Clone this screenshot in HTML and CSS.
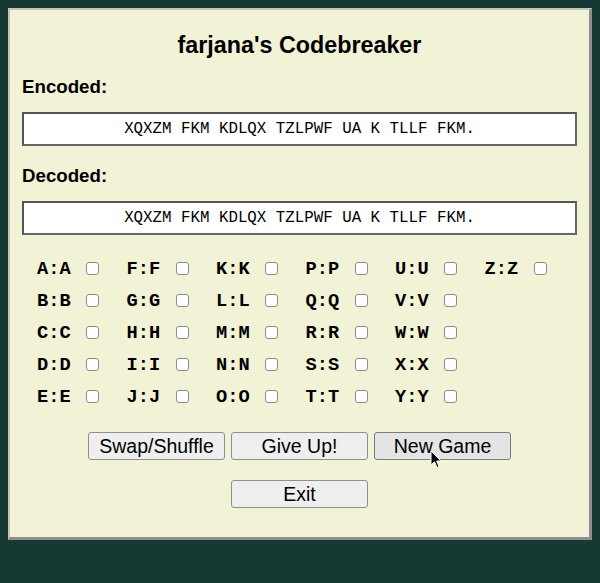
FILE: index.html
```html
<!DOCTYPE html>
<html>
<head>
<meta charset="utf-8">
<link rel="stylesheet" href="styles.css">
</head>
<body>
<div class="panel">
  <h1 class="title">farjana's Codebreaker</h1>
  <div class="label">Encoded:</div>
  <div class="box">XQXZM FKM KDLQX TZLPWF UA K TLLF FKM.</div>
  <div class="label label-dec">Decoded:</div>
  <div class="box">XQXZM FKM KDLQX TZLPWF UA K TLLF FKM.</div>
  <div class="grid">
    <div class="cell"><span class="pair">A:A</span><span class="check"></span></div>
    <div class="cell"><span class="pair">B:B</span><span class="check"></span></div>
    <div class="cell"><span class="pair">C:C</span><span class="check"></span></div>
    <div class="cell"><span class="pair">D:D</span><span class="check"></span></div>
    <div class="cell"><span class="pair">E:E</span><span class="check"></span></div>
    <div class="cell"><span class="pair">F:F</span><span class="check"></span></div>
    <div class="cell"><span class="pair">G:G</span><span class="check"></span></div>
    <div class="cell"><span class="pair">H:H</span><span class="check"></span></div>
    <div class="cell"><span class="pair">I:I</span><span class="check"></span></div>
    <div class="cell"><span class="pair">J:J</span><span class="check"></span></div>
    <div class="cell"><span class="pair">K:K</span><span class="check"></span></div>
    <div class="cell"><span class="pair">L:L</span><span class="check"></span></div>
    <div class="cell"><span class="pair">M:M</span><span class="check"></span></div>
    <div class="cell"><span class="pair">N:N</span><span class="check"></span></div>
    <div class="cell"><span class="pair">O:O</span><span class="check"></span></div>
    <div class="cell"><span class="pair">P:P</span><span class="check"></span></div>
    <div class="cell"><span class="pair">Q:Q</span><span class="check"></span></div>
    <div class="cell"><span class="pair">R:R</span><span class="check"></span></div>
    <div class="cell"><span class="pair">S:S</span><span class="check"></span></div>
    <div class="cell"><span class="pair">T:T</span><span class="check"></span></div>
    <div class="cell"><span class="pair">U:U</span><span class="check"></span></div>
    <div class="cell"><span class="pair">V:V</span><span class="check"></span></div>
    <div class="cell"><span class="pair">W:W</span><span class="check"></span></div>
    <div class="cell"><span class="pair">X:X</span><span class="check"></span></div>
    <div class="cell"><span class="pair">Y:Y</span><span class="check"></span></div>
    <div class="cell"><span class="pair">Z:Z</span><span class="check"></span></div>
  </div>
  <div class="buttons">
    <button class="btn">Swap/Shuffle</button>
    <button class="btn">Give Up!</button>
    <button class="btn btn-hover">New Game
      <svg class="cursor" width="12" height="19" viewBox="0 0 12 19"><path d="M1 1 L1 15 L4.5 11.8 L7 17.5 L9 16.6 L6.6 11 L11 11 Z" fill="#000" stroke="#fff" stroke-width="1" stroke-linejoin="round"/></svg>
    </button>
  </div>
  <div class="buttons exit-row">
    <button class="btn">Exit</button>
  </div>
</div>
</body>
</html>
```
FILE: styles.css
```css
html, body {
  margin: 0;
  padding: 0;
}
body {
  background: #163a33;
  padding: 8px;
  font-family: "Liberation Sans", Arial, sans-serif;
  font-size: 18.7px;
  color: #000;
}
.panel {
  background: #f2f2d7;
  border-style: solid;
  border-width: 2px 3px 3px 2px;
  border-color: #c4c4bc #8e8e8e #8e8e8e #c4c4bc;
  padding: 0 12px 29px 12px;
}
.title {
  margin: 22px 0 0 0;
  font-size: 23.3px;
  line-height: 26px;
  font-weight: bold;
  text-align: center;
}
.label {
  margin-top: 18px;
  font-weight: bold;
  font-size: 18.7px;
  line-height: 22px;
}
.label-dec {
  margin-top: 19px;
}
.box {
  margin-top: 14px;
  height: 30px;
  border: 2px solid #555;
  border-bottom-color: #666;
  border-right-color: #666;
  background: #fff;
  font-family: "Liberation Mono", "Courier New", monospace;
  font-size: 15.8px;
  line-height: 30px;
  text-align: center;
}
.grid {
  margin-top: 18px;
  padding-left: 15px;
  display: grid;
  grid-auto-flow: column;
  grid-template-rows: repeat(5, 32px);
  grid-auto-columns: 89.5px;
}
.cell {
  display: flex;
  align-items: center;
}
.pair {
  width: 49px;
  font-family: "Liberation Mono", "Courier New", monospace;
  font-weight: bold;
  font-size: 18.7px;
  line-height: 32px;
}
.check {
  width: 11px;
  height: 11px;
  border: 1px solid #8a8a8a;
  border-radius: 3px;
  background: #fff;
  margin-top: -1px;
}
.buttons {
  margin-top: 19px;
  display: flex;
  justify-content: center;
  gap: 6px;
}
.exit-row {
  margin-top: 20px;
}
.btn {
  position: relative;
  width: 137px;
  height: 28px;
  padding: 0;
  background: #efefef;
  border: 1px solid #8f8f8f;
  border-radius: 3px;
  font-family: "Liberation Sans", Arial, sans-serif;
  font-size: 19.5px;
  color: #000;
}
.btn-hover {
  background: #e4e4e4;
  border-color: #7a7a7a;
}
.cursor {
  position: absolute;
  left: 55px;
  top: 17px;
}
```
